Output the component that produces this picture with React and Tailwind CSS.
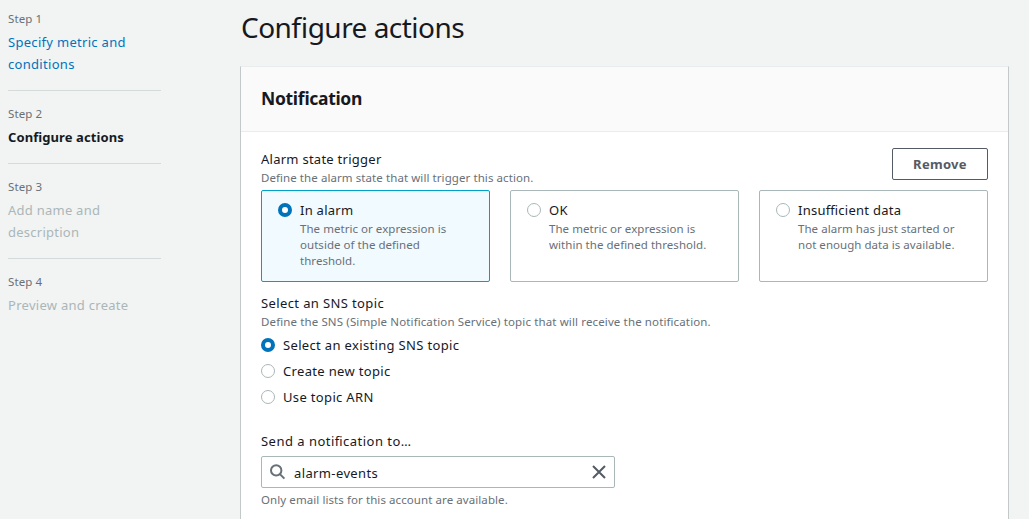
import React from "react";

const steps = [
  { step: "Step 1", lines: ["Specify metric and", "conditions"], tone: "tracking-[0.3px] text-[#0073bb]" },
  { step: "Step 2", lines: ["Configure actions"], tone: "tracking-[0.1px] font-bold text-[#16191f]" },
  { step: "Step 3", lines: ["Add name and", "description"], tone: "tracking-[0.25px] text-[#aab7b8]" },
  { step: "Step 4", lines: ["Preview and create"], tone: "tracking-[0.28px] text-[#aab7b8]" },
];

const triggers = [
  {
    title: "In alarm",
    lines: ["The metric or expression is", "outside of the defined", "threshold."],
    checked: true,
  },
  { title: "OK", lines: ["The metric or expression is", "within the defined threshold."] },
  { title: "Insufficient data", lines: ["The alarm has just started or", "not enough data is available."] },
];

const topics = [
  { title: "Select an existing SNS topic", checked: true },
  { title: "Create new topic" },
  { title: "Use topic ARN" },
];

function Radio({ checked }) {
  return (
    <span
      className={
        checked
          ? "block size-[14px] shrink-0 rounded-full border-4 border-[#0073bb] bg-white"
          : "block size-[14px] shrink-0 rounded-full border border-[#aab7b8] bg-white"
      }
    />
  );
}

function Steps() {
  return (
    <nav className="ml-2 w-[153px] shrink-0 pt-[11px]">
      {steps.map((s, i) => (
        <div key={s.step} className={i > 0 ? "border-t border-[#d5dbdb] pt-[15px] pb-[15px]" : "pb-[15px]"}>
          <div className="text-[11.5px] leading-4 tracking-[0.1px] text-[#687078]">{s.step}</div>
          <div className={`mt-1 text-[13px] leading-[22px] whitespace-nowrap ${s.tone}`}>
            {s.lines.map((l) => (
              <div key={l}>{l}</div>
            ))}
          </div>
        </div>
      ))}
    </nav>
  );
}

export default function App() {
  return (
    <div className="flex h-[519px] w-[1029px] overflow-hidden bg-[#f2f3f3] font-['Noto_Sans',sans-serif] text-[13px] leading-[22px] tracking-[0.26px] whitespace-nowrap text-[#16191f] [font-feature-settings:'liga']">
      <Steps />
      <main className="ml-[79px] w-[769px] shrink-0">
        <h1 className="mt-[9px] ml-[1px] text-[28px] leading-9 tracking-[-0.53px]">Configure actions</h1>
        <section className="mt-[21px] h-[480px] border border-x-[#c3c8c8] border-t-[#eaeded] bg-white">
          <header className="flex h-[65px] items-center border-b border-[#eaeded] bg-[#fafafa] px-5 pb-[2px]">
            <h2 className="text-[17.5px] font-bold tracking-[-0.33px]">Notification</h2>
          </header>
          <div className="px-5 pt-4">
            <div className="flex h-[42px] justify-between">
              <div>
                <div>Alarm state trigger</div>
                <div className="text-[11.5px] leading-4 tracking-[0.08px] text-[#687078]">
                  Define the alarm state that will trigger this action.
                </div>
              </div>
              <button className="h-8 w-24 rounded-[2px] border border-[#545b64] font-bold tracking-[0.3px] text-[#545b64]">
                Remove
              </button>
            </div>
            <div className="grid h-[92px] grid-cols-3 gap-5">
              {triggers.map((t) => (
                <label
                  key={t.title}
                  className={`flex rounded-[2px] border pt-2 pl-4 ${
                    t.checked ? "border-[#00a1c9] bg-[#f1faff]" : "border-[#aab7b8] bg-white"
                  }`}
                >
                  <span className="pt-1">
                    <Radio checked={t.checked} />
                  </span>
                  <span className="ml-2">
                    <span className="block">{t.title}</span>
                    {t.lines.map((l) => (
                      <span key={l} className="block text-[11.5px] leading-4 tracking-[0.04px] text-[#687078]">
                        {l}
                      </span>
                    ))}
                  </span>
                </label>
              ))}
            </div>
            <div className="mt-[10px] tracking-[0.38px]">Select an SNS topic</div>
            <div className="text-[11.5px] leading-4 tracking-[0.13px] text-[#687078]">
              Define the SNS (Simple Notification Service) topic that will receive the notification.
            </div>
            <div className="mt-1 flex flex-col gap-1 tracking-[0.34px]">
              {topics.map((t) => (
                <label key={t.title} className="flex items-center gap-2">
                  <Radio checked={t.checked} />
                  <span>{t.title}</span>
                </label>
              ))}
            </div>
            <div className="mt-[22px] tracking-[0.48px]">Send a notification to…</div>
            <div className="mt-1 flex h-8 w-[354px] items-center rounded-[2px] border border-[#aab7b8] bg-white pr-2 pl-2">
              <svg className="size-4" viewBox="0 0 16 16" fill="none" stroke="#687078" strokeWidth="2">
                <circle cx="6.2" cy="6.4" r="5.2" />
                <path d="M9.9 10.1 L14.4 14.6" />
              </svg>
              <span className="ml-2 flex-1 pt-[2px] tracking-[0.38px]">alarm-events</span>
              <svg className="size-[14px]" viewBox="0 0 14 14" fill="none" stroke="#545b64" strokeWidth="2">
                <path d="M1 1 L13 13 M13 1 L1 13" />
              </svg>
            </div>
            <div className="mt-1 text-[11.5px] leading-4 tracking-[0.08px] text-[#687078]">
              Only email lists for this account are available.
            </div>
          </div>
        </section>
      </main>
    </div>
  );
}
